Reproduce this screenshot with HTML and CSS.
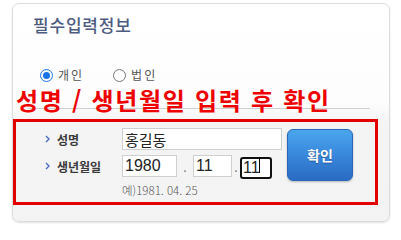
FILE: index.html
```html
<!DOCTYPE html>
<html lang="ko">
<head>
<meta charset="utf-8">
<link rel="stylesheet" href="styles.css">
</head>
<body>
<div class="card">
  <h2 class="title">필수입력정보</h2>
  <div class="types">
    <label class="radio"><span class="dot on"></span>개인</label>
    <label class="radio"><span class="dot"></span>법인</label>
  </div>
  <div class="sep"></div>
  <div class="form">
    <div class="fields">
      <div class="row">
        <span class="label"><svg class="chev" width="5" height="8" viewBox="0 0 5 8"><polyline points="1,1 4,4 1,7" fill="none" stroke="#4a6cc4" stroke-width="1.4"/></svg>성명</span>
        <input class="inp name" type="text" value="홍길동">
      </div>
      <div class="row">
        <span class="label"><svg class="chev" width="5" height="8" viewBox="0 0 5 8"><polyline points="1,1 4,4 1,7" fill="none" stroke="#4a6cc4" stroke-width="1.4"/></svg>생년월일</span>
        <input class="inp year" type="text" value="1980">
        <span class="dotsep wide">.</span>
        <input class="inp month" type="text" value="11">
        <span class="dotsep">.</span>
        <span class="focus-wrap"><input class="inp day" type="text" value="11"><span class="caret"></span></span>
      </div>
      <div class="hint">예)1981. 04. 25</div>
    </div>
    <button class="ok" type="button">확인</button>
  </div>
</div>
<div class="note">성명 / 생년월일 입력 후 확인</div>
<div class="note-box"></div>
</body>
</html>
```
FILE: styles.css
```css
html, body {
  margin: 0;
  padding: 0;
  background: #fff;
}
body {
  position: relative;
  width: 401px;
  height: 231px;
  overflow: hidden;
  font-family: "Noto Sans CJK KR", "Liberation Sans", sans-serif;
}
.card {
  margin: 3px 0 0 12px;
  width: 376px;
  height: 217px;
  border: 1px solid #dcdcdc;
  border-radius: 7px;
  background: linear-gradient(#ffffff 0%, #fdfdfd 45%, #f4f4f4 55%, #f3f3f3 100%);
  box-shadow: 0 1px 2px rgba(0,0,0,0.12);
  box-sizing: content-box;
}
.title {
  margin: 10px 0 0 20px;
  font-size: 17px;
  line-height: 22px;
  font-weight: 500;
  color: #4d5b80;
  letter-spacing: 0.8px;
}
.types {
  display: flex;
  gap: 29px;
  margin: 31px 0 0 27px;
  height: 16px;
  align-items: center;
}
.radio {
  display: flex;
  align-items: center;
  gap: 5px;
  font-size: 12px;
  line-height: 16px;
  color: #555;
  letter-spacing: 2px;
}
.dot {
  width: 11px;
  height: 11px;
  border: 1px solid #767676;
  border-radius: 50%;
  background: #fff;
  box-sizing: content-box;
  position: relative;
}
.dot.on {
  border-color: #1a73e8;
}
.dot.on::after {
  content: "";
  position: absolute;
  left: 2px;
  top: 2px;
  width: 7px;
  height: 7px;
  border-radius: 50%;
  background: #1a73e8;
}
.sep {
  margin: 25px 0 0 15px;
  width: 342px;
  height: 1px;
  background: #cfcfcf;
}
.form {
  display: flex;
  align-items: flex-start;
  margin: 19px 0 0 32px;
}
.fields {
  display: flex;
  flex-direction: column;
  gap: 5px;
}
.row {
  display: flex;
  align-items: center;
  height: 22px;
}
.label {
  width: 77px;
  display: flex;
  align-items: center;
  gap: 7px;
  font-size: 12px;
  font-weight: 700;
  color: #3a3a3a;
}
.chev {
  display: block;
}
.inp {
  box-sizing: border-box;
  height: 22px;
  margin: 0;
  padding: 0 2px;
  border: 1px solid #cfcfcf;
  background: #fff;
  font-family: "Liberation Sans", "Noto Sans CJK KR", sans-serif;
  font-size: 16px;
  color: #222;
  outline: none;
}
.name {
  width: 160px;
  font-family: "Noto Sans CJK KR", sans-serif;
  font-size: 15px;
}
.year { width: 55px; }
.month { width: 39px; }
.dotsep {
  width: 8px;
  text-align: center;
  font-size: 12px;
  color: #777;
}
.dotsep.wide { width: 16px; }
.focus-wrap {
  position: relative;
  display: block;
}
.day {
  width: 32px;
  border: 2px solid #111;
  border-radius: 3px;
  padding: 0 1px;
}
.caret {
  position: absolute;
  left: 19px;
  top: 3px;
  width: 1px;
  height: 16px;
  background: #000;
}
.hint {
  margin: 0 0 0 77px;
  font-size: 11.5px;
  line-height: 16px;
  font-weight: 300;
  color: #555;
}
.ok {
  margin: 1px 0 0 5px;
  width: 66px;
  height: 52px;
  border: 1px solid #2b66b8;
  border-radius: 6px;
  background: linear-gradient(#4ba6ee 0%, #3a8ade 45%, #2a6bc4 100%);
  box-shadow: 0 1px 2px rgba(0,0,0,0.25);
  color: #fff;
  font-family: "Noto Sans CJK KR", sans-serif;
  font-size: 14px;
  font-weight: 700;
  text-shadow: 0 1px 1px rgba(0,0,0,0.3);
  padding: 0;
}
.note {
  position: absolute;
  left: 16px;
  top: 85px;
  font-size: 24px;
  line-height: 30px;
  font-weight: 700;
  color: #ee0000;
  letter-spacing: 1.7px;
  white-space: nowrap;
}
.note-box {
  position: absolute;
  left: 13px;
  top: 119px;
  width: 359px;
  height: 80px;
  border: 3px solid #e20000;
}
```
